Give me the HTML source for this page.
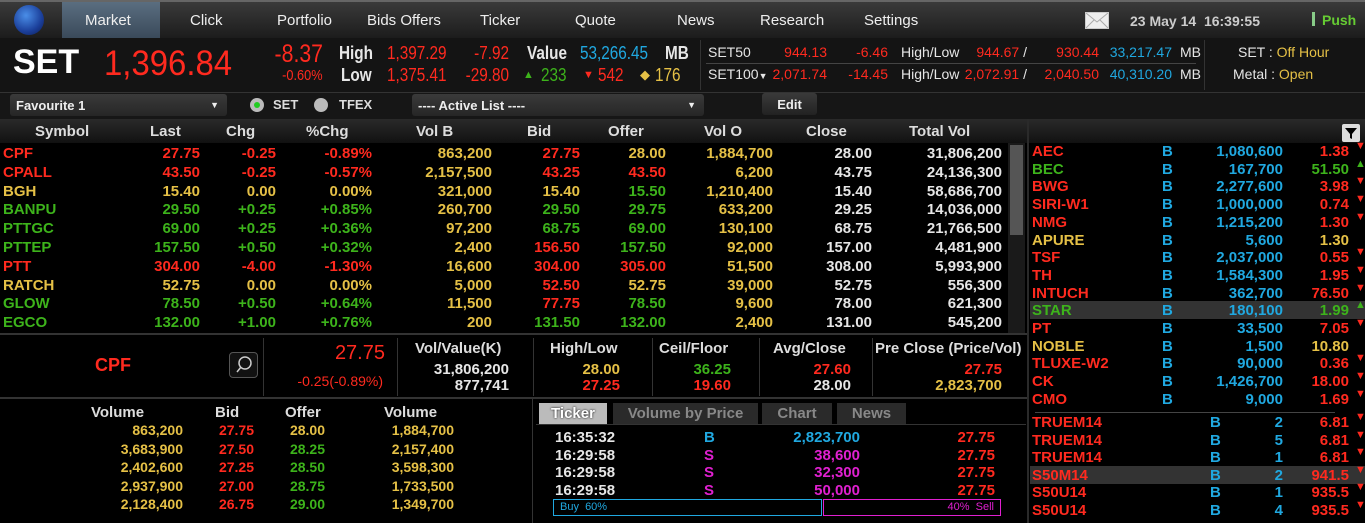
<!DOCTYPE html>
<html><head><meta charset="utf-8"><style>
*{margin:0;padding:0;box-sizing:border-box}
body{width:1365px;height:523px;background:#000;font-family:"Liberation Sans",Arial,sans-serif;position:relative;overflow:hidden;color:#ddd}
.a{position:absolute;white-space:nowrap;line-height:1}
.r{color:#ff2a1f}.g{color:#3db31b}.y{color:#e5c046}.b{color:#20a8e0}.w{color:#e6e6e6}.m{color:#e020d0}
.bd{font-weight:bold}
.rt{text-align:right}
.sx{transform:scaleX(.85);transform-origin:left}
.sxr{transform:scaleX(.85);transform-origin:right}
</style></head><body>
<div class="a" style="left:0;top:0;width:1365px;height:38px;background:linear-gradient(#3a3a3a,#1c1c1c);border-top:2px solid #666"></div>
<div class="a" style="left:14px;top:5px;width:30px;height:30px;border-radius:50%;background:radial-gradient(circle at 40% 35%,#4a8ee8,#1b3f9a 60%,#0a1a50)"></div>
<div class="a" style="left:62px;top:2px;width:98px;height:36px;background:linear-gradient(#5a6e80,#3a4a5a)"></div>
<div class="a" style="left:0;top:38px;width:1365px;height:54px;background:#141414"></div>
<div style="font-size:15px;color:#eee">
<div class="a" style="left:85px;top:13px">Market</div>
<div class="a" style="left:190px;top:13px">Click</div>
<div class="a" style="left:277px;top:13px">Portfolio</div>
<div class="a" style="left:367px;top:13px">Bids Offers</div>
<div class="a" style="left:480px;top:13px">Ticker</div>
<div class="a" style="left:575px;top:13px">Quote</div>
<div class="a" style="left:677px;top:13px">News</div>
<div class="a" style="left:760px;top:13px">Research</div>
<div class="a" style="left:864px;top:13px">Settings</div>
</div>
<div class="a" style="left:1085px;top:12px;width:24px;height:17px;background:#eee;border:1px solid #ccc"><svg width="22" height="15"><path d="M0 0L11 9L22 0M0 15L8 7M22 15L14 7" stroke="#aaa" fill="none"/></svg></div>
<div class="a bd" style="left:1130px;top:14px;font-size:14px;color:#ccc">23 May 14&nbsp;&nbsp;16:39:55</div>
<div class="a" style="left:1312px;top:12px;width:3px;height:14px;background:#8c8"></div>
<div class="a bd" style="left:1322px;top:13px;font-size:14px;color:#6c3">Push</div>
<div class="a bd w" style="left:13px;top:45px;font-size:34px;color:#fff">SET</div>
<div class="a r" style="left:104px;top:46px;font-size:35px;transform:scaleX(.94);transform-origin:left">1,396.84</div>
<div class="a r rt sxr" style="right:1042px;top:42px;font-size:25px">-8.37</div>
<div class="a r rt sxr" style="right:1042px;top:68px;font-size:15px">-0.60%</div>
<div class="a bd w sx" style="left:339px;top:44px;font-size:18px">High</div>
<div class="a bd w sx" style="left:341px;top:66px;font-size:18px">Low</div>
<div class="a r sx" style="left:387px;top:44px;font-size:18px">1,397.29</div>
<div class="a r sx" style="left:387px;top:66px;font-size:18px">1,375.41</div>
<div class="a r rt sxr" style="right:856px;top:44px;font-size:18px">-7.92</div>
<div class="a r rt sxr" style="right:856px;top:66px;font-size:18px">-29.80</div>
<div class="a bd w sx" style="left:527px;top:44px;font-size:18px">Value</div>
<div class="a b sx" style="left:580px;top:44px;font-size:18px">53,266.45</div>
<div class="a bd w sx" style="left:665px;top:44px;font-size:18px">MB</div>
<div class="a g" style="left:523px;top:70px;font-size:11px">▲</div><div class="a g sx" style="left:541px;top:66px;font-size:18px">233</div>
<div class="a r" style="left:583px;top:70px;font-size:11px">▼</div><div class="a r sx" style="left:598px;top:66px;font-size:18px">542</div>
<div class="a y" style="left:640px;top:68px;font-size:13px">◆</div><div class="a y sx" style="left:655px;top:66px;font-size:18px">176</div>
<div class="a" style="left:700px;top:40px;width:505px;height:50px;border-left:1px solid #333;border-right:1px solid #333"></div>
<div class="a" style="left:706px;top:63px;width:490px;height:1px;background:#444"></div>
<div style="font-size:14px">
<div class="a w" style="left:708px;top:45px">SET50</div>
<div class="a w" style="left:708px;top:67px">SET100<span style="font-size:9px">▼</span></div>
<div class="a r rt" style="right:538px;top:45px">944.13</div>
<div class="a r rt" style="right:538px;top:67px">2,071.74</div>
<div class="a r rt" style="right:477px;top:45px">-6.46</div>
<div class="a r rt" style="right:477px;top:67px">-14.45</div>
<div class="a w" style="left:901px;top:45px">High/Low</div>
<div class="a w" style="left:901px;top:67px">High/Low</div>
<div class="a r rt" style="right:338px;top:45px">944.67 <span class="w">/</span></div>
<div class="a r rt" style="right:338px;top:67px">2,072.91 <span class="w">/</span></div>
<div class="a r rt" style="right:266px;top:45px">930.44</div>
<div class="a r rt" style="right:266px;top:67px">2,040.50</div>
<div class="a b rt" style="right:193px;top:45px">33,217.47</div>
<div class="a b rt" style="right:193px;top:67px">40,310.20</div>
<div class="a w" style="left:1180px;top:45px">MB</div>
<div class="a w" style="left:1180px;top:67px">MB</div>
<div class="a w" style="left:1238px;top:45px">SET : <span class="y">Off Hour</span></div>
<div class="a w" style="left:1233px;top:67px">Metal : <span class="y">Open</span></div>
</div>
<div class="a" style="left:0;top:92px;width:1365px;height:27px;background:#161616;border-top:1px solid #333"></div>
<div class="a bd" style="left:10px;top:94px;width:217px;height:22px;background:linear-gradient(#3a3a3a,#262626);border-radius:3px;font-size:13px;color:#eee;padding:5px 6px">Favourite 1<span style="position:absolute;right:8px;font-size:9px;top:7px">▼</span></div>
<div class="a" style="left:250px;top:98px;width:14px;height:14px;border-radius:50%;background:#bbb"><div style="margin:4px;width:6px;height:6px;border-radius:50%;background:#2c2"></div></div>
<div class="a bd" style="left:273px;top:98px;font-size:13px;color:#ddd">SET</div>
<div class="a" style="left:314px;top:98px;width:14px;height:14px;border-radius:50%;background:#bbb"></div>
<div class="a bd" style="left:339px;top:98px;font-size:13px;color:#ddd">TFEX</div>
<div class="a bd" style="left:412px;top:94px;width:292px;height:22px;background:linear-gradient(#3a3a3a,#262626);border-radius:3px;font-size:13px;color:#eee;padding:5px 6px">---- Active List ----<span style="position:absolute;right:8px;font-size:9px;top:7px">▼</span></div>
<div class="a bd" style="left:762px;top:93px;width:55px;height:22px;background:linear-gradient(#3a3a3a,#222);border-radius:3px;font-size:13px;color:#eee;text-align:center;padding-top:5px">Edit</div>
<div class="a" style="left:0;top:119px;width:1365px;height:24px;background:linear-gradient(#2a2a2a,#111)"></div>
<div class="a" style="left:1027px;top:119px;width:2px;height:404px;background:#2a2a2a"></div>
<div class="a" style="left:1342px;top:124px;width:18px;height:18px;background:#ddd;border-radius:2px"><svg width="18" height="18"><path d="M3 4H15L10 10V15L8 14V10Z" fill="#000"/></svg></div>
<div class="a bd" style="top:124px;left:0;font-size:15px;color:#ddd;width:1027px">
<span class="a" style="left:35px">Symbol</span><span class="a" style="left:150px">Last</span><span class="a" style="left:226px">Chg</span><span class="a" style="left:306px">%Chg</span><span class="a" style="left:416px">Vol B</span><span class="a" style="left:527px">Bid</span><span class="a" style="left:608px">Offer</span><span class="a" style="left:704px">Vol O</span><span class="a" style="left:806px">Close</span><span class="a" style="left:909px">Total Vol</span>
</div>
<div class="a" style="left:1008px;top:143px;width:17px;height:190px;background:#1a1a1a"></div>
<div class="a" style="left:1010px;top:145px;width:13px;height:90px;background:#555"></div>
<div id="mt" class="a bd" style="left:0;top:146px;font-size:15px;width:1010px"></div>
<div class="a" style="left:0;top:333px;width:1027px;height:2px;background:#333"></div>
<div class="a bd r" style="left:95px;top:356px;font-size:18px">CPF</div>
<div class="a" style="left:229px;top:352px;width:29px;height:26px;border:1px solid #555;border-radius:4px;background:#111"><svg width="27" height="24"><circle cx="15" cy="10" r="6" stroke="#ccc" fill="none" stroke-width="1.5"/><path d="M11 14L7 19" stroke="#ccc" stroke-width="1.5"/></svg></div>
<div class="a r rt" style="right:980px;top:343px;font-size:20px">27.75</div>
<div class="a r rt" style="right:982px;top:374px;font-size:14px">-0.25(-0.89%)</div>
<div class="a" style="left:263px;top:338px;width:1px;height:58px;background:#333"></div>
<div class="a" style="left:397px;top:338px;width:1px;height:58px;background:#333"></div>
<div class="a" style="left:533px;top:338px;width:1px;height:58px;background:#333"></div>
<div class="a" style="left:652px;top:338px;width:1px;height:58px;background:#333"></div>
<div class="a" style="left:759px;top:338px;width:1px;height:58px;background:#333"></div>
<div class="a" style="left:872px;top:338px;width:1px;height:58px;background:#333"></div>
<div class="a bd" style="top:341px;left:0;font-size:15px;color:#ddd;width:1027px">
<span class="a" style="left:415px">Vol/Value(K)</span><span class="a" style="left:550px">High/Low</span><span class="a" style="left:659px">Ceil/Floor</span><span class="a" style="left:773px">Avg/Close</span><span class="a" style="left:875px">Pre Close (Price/Vol)</span>
</div>
<div style="font-size:15px" class="bd">
<div class="a w rt" style="right:856px;top:362px">31,806,200</div><div class="a w rt" style="right:856px;top:378px">877,741</div>
<div class="a y rt" style="right:745px;top:362px">28.00</div><div class="a r rt" style="right:745px;top:378px">27.25</div>
<div class="a g rt" style="right:634px;top:362px">36.25</div><div class="a r rt" style="right:634px;top:378px">19.60</div>
<div class="a r rt" style="right:514px;top:362px">27.60</div><div class="a w rt" style="right:514px;top:378px">28.00</div>
<div class="a r rt" style="right:363px;top:362px">27.75</div><div class="a y rt" style="right:363px;top:378px">2,823,700</div>
</div>
<div class="a" style="left:0;top:397px;width:1027px;height:2px;background:#333"></div>
<div class="a bd" style="top:405px;left:0;font-size:15px;color:#ddd">
<span class="a" style="left:91px">Volume</span><span class="a" style="left:215px">Bid</span><span class="a" style="left:285px">Offer</span><span class="a" style="left:384px">Volume</span>
</div>
<div id="bo" class="a bd" style="left:0;top:423px;font-size:14px;width:530px"></div>
<div class="a" style="left:532px;top:399px;width:1px;height:124px;background:#333"></div>
<div class="a bd" style="left:539px;top:403px;width:68px;height:21px;background:#bbb;color:#fff;font-size:15px;text-align:center;padding-top:3px;text-shadow:0 0 2px #000">Ticker</div>
<div class="a bd" style="left:613px;top:403px;width:145px;height:21px;background:#2a2a2a;color:#888;font-size:15px;text-align:center;padding-top:3px">Volume by Price</div>
<div class="a bd" style="left:762px;top:403px;width:70px;height:21px;background:#2a2a2a;color:#888;font-size:15px;text-align:center;padding-top:3px">Chart</div>
<div class="a bd" style="left:837px;top:403px;width:69px;height:21px;background:#2a2a2a;color:#888;font-size:15px;text-align:center;padding-top:3px">News</div>
<div class="a" style="left:536px;top:424px;width:490px;height:1px;background:#333"></div>
<div id="tk" class="a bd" style="left:0;top:430px;font-size:15px;width:1010px"></div>
<div class="a b" style="left:553px;top:499px;width:269px;height:17px;border:1px solid #20a8e0;font-size:11px;padding:2px 6px">Buy&nbsp;&nbsp;60%</div>
<div class="a m rt" style="left:823px;top:499px;width:178px;height:17px;border:1px solid #e020d0;font-size:11px;padding:2px 6px">40%&nbsp;&nbsp;Sell</div>
<div id="rp" class="a bd" style="left:0;top:144px;font-size:15px;width:1365px"></div>
<div class="a" style="left:1035px;top:412px;width:300px;height:1px;background:#444"></div>
<script>
function row(p,y,items,bg){let h='';if(bg)h+=`<div class="a" style="left:${bg[0]}px;top:${y-2}px;width:${bg[1]}px;height:18px;background:#333"></div>`;items.forEach(it=>{const[t,c,pos,al]=it;h+=`<div class="a ${c}${al?' rt':''}" style="${al?'right:'+(p-pos):'left:'+pos}px;top:${y}px">${t}</div>`});return h}
const M=[["CPF","r","27.75","-0.25","-0.89%","863,200","27.75","r","28.00","y","1,884,700","28.00","31,806,200"],
["CPALL","r","43.50","-0.25","-0.57%","2,157,500","43.25","r","43.50","r","6,200","43.75","24,136,300"],
["BGH","y","15.40","0.00","0.00%","321,000","15.40","y","15.50","g","1,210,400","15.40","58,686,700"],
["BANPU","g","29.50","+0.25","+0.85%","260,700","29.50","g","29.75","g","633,200","29.25","14,036,000"],
["PTTGC","g","69.00","+0.25","+0.36%","97,200","68.75","g","69.00","g","130,100","68.75","21,766,500"],
["PTTEP","g","157.50","+0.50","+0.32%","2,400","156.50","r","157.50","g","92,000","157.00","4,481,900"],
["PTT","r","304.00","-4.00","-1.30%","16,600","304.00","r","305.00","r","51,500","308.00","5,993,900"],
["RATCH","y","52.75","0.00","0.00%","5,000","52.50","r","52.75","y","39,000","52.75","556,300"],
["GLOW","g","78.50","+0.50","+0.64%","11,500","77.75","r","78.50","g","9,600","78.00","621,300"],
["EGCO","g","132.00","+1.00","+0.76%","200","131.50","g","132.00","g","2,400","131.00","545,200"]];
let h='';M.forEach((m,i)=>{const y=i*18.8;const c=m[1];h+=row(1010,y,[[m[0],c,3],[m[2],c,200,1],[m[3],c,276,1],[m[4],c,372,1],[m[5],'y',492,1],[m[6],m[7],580,1],[m[8],m[9],666,1],[m[10],'y',773,1],[m[11],'w',872,1],[m[12],'w',1002,1]])});
document.getElementById('mt').innerHTML=h;
const B=[["863,200","27.75","28.00","y","1,884,700"],["3,683,900","27.50","28.25","g","2,157,400"],["2,402,600","27.25","28.50","g","3,598,300"],["2,937,900","27.00","28.75","g","1,733,500"],["2,128,400","26.75","29.00","g","1,349,700"]];
h='';B.forEach((b,i)=>{h+=row(530,i*18.5,[[b[0],'y',183,1],[b[1],'r',254,1],[b[2],b[3],325,1],[b[4],'y',454,1]])});document.getElementById('bo').innerHTML=h;
const T=[["16:35:32","B","b","2,823,700"],["16:29:58","S","m","38,600"],["16:29:58","S","m","32,300"],["16:29:58","S","m","50,000"]];
h='';T.forEach((t,i)=>{h+=row(1010,i*17.7,[[t[0],'w',555],[t[1],t[2],704],[t[3],t[2],860,1],["27.75",'r',995,1]])});document.getElementById('tk').innerHTML=h;
const R=[["AEC","r","1,080,600","1.38","d"],["BEC","g","167,700","51.50","u"],["BWG","r","2,277,600","3.98","d"],["SIRI-W1","r","1,000,000","0.74","d"],["NMG","r","1,215,200","1.30","d"],["APURE","y","5,600","1.30",""],["TSF","r","2,037,000","0.55","d"],["TH","r","1,584,300","1.95","d"],["INTUCH","r","362,700","76.50","d"],["STAR","g","180,100","1.99","u"],["PT","r","33,500","7.05","d"],["NOBLE","y","1,500","10.80",""],["TLUXE-W2","r","90,000","0.36","d"],["CK","r","1,426,700","18.00","d"],["CMO","r","9,000","1.69","d"]];
h='';R.forEach((r,i)=>{const y=i*17.7;h+=row(1365,y,[[r[0],r[1],1032],["B",'b',1162],[r[2],'b',1283,1],[r[3],r[1],1349,1]],i==9?[1030,335]:null);if(r[4])h+=`<div class="a ${r[4]=='d'?'r':'g'}" style="left:1355px;top:${y-3}px;font-size:11px">${r[4]=='d'?'▼':'▲'}</div>`});
const F=[["TRUEM14","2","6.81"],["TRUEM14","5","6.81"],["TRUEM14","1","6.81"],["S50M14","2","941.5"],["S50U14","1","935.5"],["S50U14","4","935.5"]];
F.forEach((f,i)=>{const y=271+i*17.6;h+=row(1365,y,[[f[0],'r',1032],["B",'b',1210],[f[1],'b',1283,1],[f[2],'r',1349,1]],i==3?[1030,335]:null);h+=`<div class="a r" style="left:1355px;top:${y-3}px;font-size:11px">▼</div>`});
document.getElementById('rp').innerHTML=h;
</script>
</body></html>
